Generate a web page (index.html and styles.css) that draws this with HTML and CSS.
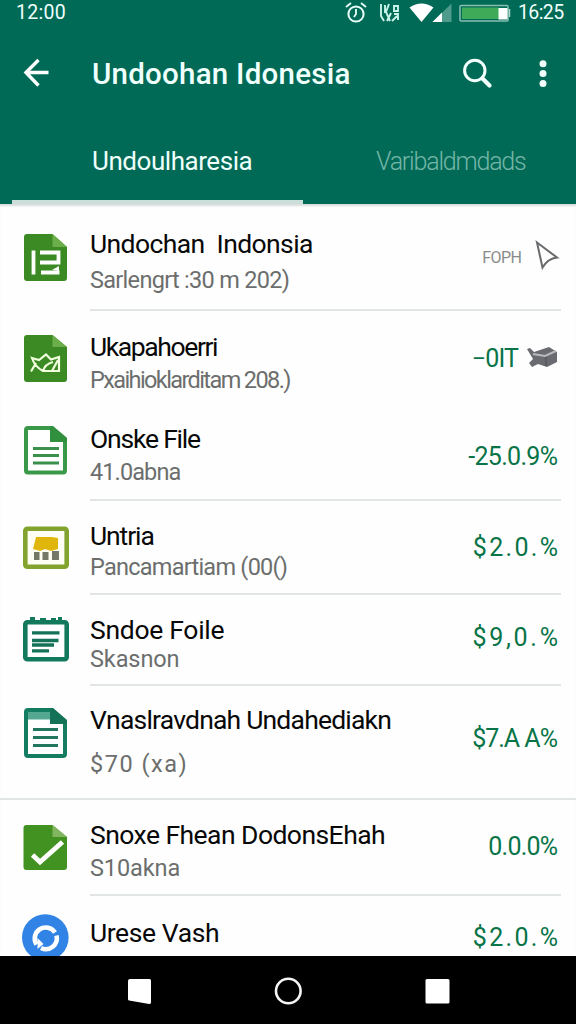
FILE: index.html
```html
<!DOCTYPE html>
<html lang="id">
<head>
<meta charset="utf-8">
<title>Undoohan Idonesia</title>
<link rel="stylesheet" href="styles.css">
</head>
<body>
<div class="screen">
  <header class="header">
    <div class="status">
      <span class="clock">12:00</span>
      <svg class="status-icons" width="170" height="26" viewBox="342 0 170 26">
        <g fill="none" stroke="#eafffa" stroke-width="2"><circle cx="356" cy="14" r="7.6"/><path d="M356 9v5l-2 3M346 7l5-4M361 3l5 4" stroke-width="1.8"/></g>
        <path d="M381 4v12l3 5M385 5v8M389 4l-3 8 4 9M391 13l-4 8M394 6h4v5h-4zM394 14h4v6M392 21l5-5" fill="none" stroke="#c9f3e9" stroke-width="1.9"/>
        <path d="M409.500 7.500Q421.500-.500 433.500 7.500L421.500 22Z" fill="#fff"/>
        <path d="M432.500 22L451.500 3.500V22Z" fill="#4e9a8b"/><path d="M432.500 22L442 12.500V22Z" fill="#fff"/>
        <rect x="460" y="5.500" width="48" height="15.500" rx="1" fill="none" stroke="#85bfb0" stroke-width="1.500"/>
        <rect x="462" y="7.500" width="37" height="11.500" fill="#3fab59"/><rect x="498.500" y="8" width="9" height="11.500" fill="#fff"/><path d="M509.500 9v8" stroke="#a8d5ca" stroke-width="1.500"/>
      </svg>
      <span class="clock clock-end">16:25</span>
    </div>
    <div class="toolbar">
      <svg class="back" width="28" height="32" viewBox="22 57 28 32"><path d="M48.500 72.500H26M38.500 60L26 72.500L38.500 85.500" fill="none" stroke="#fff" stroke-width="3.400"/></svg>
      <h1 class="heading">Undoohan Idonesia</h1>
      <svg class="search" width="34" height="34" viewBox="460 56 34 34" fill="none" stroke="#f2fffc"><circle cx="474.800" cy="70.500" r="10.200" stroke-width="3"/><path d="M482.500 78.500L489.500 85.500" stroke-width="4.200" stroke-linecap="round"/></svg>
      <svg class="more" width="10" height="34" viewBox="538 56 10 34" fill="#f2fffc"><circle cx="543" cy="63.800" r="3.500"/><circle cx="543" cy="73.500" r="3.500"/><circle cx="543" cy="83.500" r="3.500"/></svg>
    </div>
    <nav class="tabs">
      <span class="tab tab-active"><span class="tab-main">Undoulharesia</span></span>
      <span class="tab"><span class="tab-other">Varibaldmdads</span></span>
    </nav>
  </header>

  <main class="list">
    <article class="row r1">
      <svg class="icon" width="48" height="52" viewBox="22 232 48 52"><path d="M27 234H52.500L67 247V278a3 3 0 0 1-3 3H27a3 3 0 0 1-3-3V237a3 3 0 0 1 3-3Z" fill="#3b8a24"/><path d="M52.500 234L67 247H52.500Z" fill="#6cae49"/><path d="M33.500 250.500V274.500M40 252.500H58.500V262.500H40M41 272.500H59.500" fill="none" stroke="#fff" stroke-width="3.800"/><path d="M52 270l7-4v5z" fill="#fff"/></svg>
      <div class="text"><h2 class="title">Undochan &nbsp;Indonsia</h2><p class="sub">Sarlengrt :30 m 202)</p></div>
      <div class="value tiny"><span>FOPH</span><svg width="26" height="32" viewBox="534 239 26 32"><path d="M537 242.500L557 257.500Q548 258.500 542.500 267.500Z" fill="#fff" stroke="#686a6c" stroke-width="2"/></svg></div>
    </article>
    <article class="row r2">
      <svg class="icon" width="48" height="52" viewBox="22 333 48 52"><path d="M27 335H52.500L67 347V379a3 3 0 0 1-3 3H27a3 3 0 0 1-3-3V338a3 3 0 0 1 3-3Z" fill="#3b8a24"/><path d="M52.500 335L67 347H52.500Z" fill="#6cae49"/><path d="M32 358L39 360L46 354.500L51 359.500L59 357V371H43Q35 367 32 358ZM31 371.500L36 363M43 371Q45 364 53 362M52 371L58 360" fill="none" stroke="#f1ffdd" stroke-width="2.200"/></svg>
      <div class="text"><h2 class="title">Ukapahoerri</h2><p class="sub">Pxaihioklarditam 208.)</p></div>
      <div class="value"><span>−0IT</span><svg width="34" height="24" viewBox="526 344 34 24"><path d="M527 349L530 348L534 352L549 347L557 352V362L547 367L538 364L532 367L529 363L533 359Z" fill="#696b70"/><path d="M533 354L545 356L556 351" fill="none" stroke="#b8babd" stroke-width="2"/><path d="M546 357V366" stroke="#4d4f54" stroke-width="1"/></svg></div>
    </article>
    <article class="row r3">
      <svg class="icon" width="48" height="52" viewBox="22 425 48 52"><path d="M28 428H51.500L65 439V470.500a2 2 0 0 1-2 2H28a2 2 0 0 1-2-2V430a2 2 0 0 1 2-2Z" fill="#fff" stroke="#3a9948" stroke-width="4"/><path d="M50 426H53L67 438V442H50Z" fill="#31903d"/><path d="M33 448.500H59M33 455.500H59M33 463H59" stroke="#3b914c" stroke-width="2.800"/></svg>
      <div class="text"><h2 class="title">Onske File</h2><p class="sub">41.0abna</p></div>
      <div class="value"><span>-25.0.9%</span></div>
    </article>
    <article class="row r4">
      <svg class="icon" width="48" height="46" viewBox="22 525 48 46"><rect x="25.300" y="528.800" width="41.400" height="38" rx="2" fill="#fffef5" stroke="#82a32e" stroke-width="4.600"/><path d="M36 537L52 537L58 538V549L51 551L45 549L40 551L33 549Z" fill="#e0b60d"/><path d="M34 552H39.500V560H34ZM42.500 552H48.500V560H42.500ZM52 551H59V560H52Z" fill="#747867"/></svg>
      <div class="text"><h2 class="title">Untria</h2><p class="sub">Pancamartiam (00()</p></div>
      <div class="value"><span>$2.0.%</span></div>
    </article>
    <article class="row r5">
      <svg class="icon" width="48" height="48" viewBox="22 615 48 48"><rect x="25.300" y="622.300" width="41.400" height="37" rx="2" fill="#fff" stroke="#13795c" stroke-width="4.600"/><path d="M30 617H35V621H40V618H46V621H51V618H56V621H58V617H62V623H30Z" fill="#13795c"/><path d="M32 632.800H59.500M32 640.500H58.500M32 645H54M32 650.800H49" stroke="#137258" stroke-width="3.300"/></svg>
      <div class="text"><h2 class="title">Sndoe Foile</h2><p class="sub">Skasnon</p></div>
      <div class="value"><span>$9,0.%</span></div>
    </article>
    <article class="row r6">
      <svg class="icon" width="48" height="52" viewBox="22 707 48 52"><path d="M28 710H52L65 722V754a2 2 0 0 1-2 2H28a2 2 0 0 1-2-2V712a2 2 0 0 1 2-2Z" fill="#fff" stroke="#147d61" stroke-width="4"/><path d="M28 712H51V719.500H28Z" fill="#54a891"/><path d="M50 708H53L67 720V724H50Z" fill="#147357"/><path d="M33 729.500H58M33 737.500H58M33 745.500H58" stroke="#22755e" stroke-width="2.800"/></svg>
      <div class="text"><h2 class="title">Vnaslravdnah Undahediakn</h2><p class="sub">$70 (xa)</p></div>
      <div class="value"><span>$7.A A%</span></div>
    </article>
    <article class="row r7">
      <svg class="icon" width="48" height="50" viewBox="22 823 48 50"><path d="M26.500 825H52.500L67 837V867a3 3 0 0 1-3 3H26.500a3 3 0 0 1-3-3V828a3 3 0 0 1 3-3Z" fill="#419221"/><path d="M52.500 825L67 837H52.500Z" fill="#82b55f"/><path d="M32.500 855L40 862L62.500 842" fill="none" stroke="#fff" stroke-width="4.800"/></svg>
      <div class="text"><h2 class="title">Snoxe Fhean DodonsEhah</h2><p class="sub">S10akna</p></div>
      <div class="value"><span>0.0.0%</span></div>
    </article>
    <article class="row r8">
      <svg class="icon" width="48" height="48" viewBox="22 913 48 48"><circle cx="45.300" cy="937.500" r="23.300" fill="#3183e6"/><path d="M36.500 944.500A11 11 0 0 1 55 932.500M56.500 935.500A11 11 0 0 1 41 948" fill="none" stroke="#fff" stroke-width="4.600"/><path d="M37.500 938V949L43.500 944Z" fill="#fff"/></svg>
      <div class="text"><h2 class="title">Urese Vash</h2></div>
      <div class="value"><span>$2.0.%</span></div>
    </article>
  </main>

  <footer class="navbar">
    <svg width="26" height="28" viewBox="127 977 26 28"><path d="M130 979H149.500a1.500 1.500 0 0 1 1.500 1.500V1002.500a1.500 1.500 0 0 1-1.800 1.400L129 1000.500a1.500 1.500 0 0 1-1-1.500V981a2 2 0 0 1 2-2Z" fill="#fff"/></svg>
    <svg width="30" height="30" viewBox="273 976 30 30"><circle cx="288.300" cy="991" r="12.300" fill="none" stroke="#f5f5f5" stroke-width="2.600"/></svg>
    <svg width="26" height="28" viewBox="425 977 26 28"><rect x="425.500" y="979" width="24" height="24.500" rx="1.500" fill="#fff"/></svg>
  </footer>
</div>
</body>
</html>
```
FILE: styles.css
```css
* { box-sizing: border-box; }
body { margin: 0; font-family: Roboto, "Noto Sans", sans-serif; }
h1, h2, p { margin: 0; font-weight: 400; white-space: nowrap; }
svg { display: block; flex: none; }

.screen { width: 576px; height: 1024px; display: flex; flex-direction: column; overflow: hidden; background: #fdfefd; }

.header { height: 204px; flex: none; background: #006a56; color: #effffb; display: flex; flex-direction: column; }
.status { height: 26px; display: flex; padding-left: 16px; }
.clock { width: 326px; font-size: 19.5px; line-height: 26px; letter-spacing: 0.3px; }
.clock-end { width: 58px; padding-left: 6px; letter-spacing: -0.6px; }
.toolbar { height: 94px; display: flex; align-items: flex-start; padding: 30px 0 0 22px; }
.back { margin-top: 1px; }
.heading { width: 368px; margin: 0 0 0 42px; font-size: 29.5px; line-height: 36px; font-weight: 500; letter-spacing: 0.25px; }
.more { margin-left: 44px; }
.tabs { height: 84px; display: flex; padding-left: 12px; }
.tab { height: 84px; padding: 24px 0 0 80px; font-size: 26px; line-height: 34px; white-space: nowrap; }
.tab-active { width: 291px; border-bottom: 4px solid #cbded9; }
.tab-main { letter-spacing: -0.45px; }
.tab-other { color: #74b5a6; font-size: 25px; font-weight: 300; letter-spacing: -1.2px; }
.tab + .tab { padding-left: 73px; }

.list { flex: 1; min-height: 0; overflow: hidden; box-shadow: inset 0 3px 2px -1px #d9dedc; }
.row { display: flex; height: var(--h); padding-left: 22px; }
.icon { margin-top: var(--icon); }
.text { flex: 1; margin-left: 20px; padding-top: var(--title); border-bottom: 2px solid #e2e5e5; }
.value { width: 150px; margin-right: 15px; padding: var(--value) 3px 0 0; display: flex; justify-content: flex-end; white-space: nowrap; font-size: 25px; line-height: 30px; color: #087448; border-bottom: 2px solid #e2e5e5; }
.value span { letter-spacing: var(--vs); margin-right: calc(-1 * var(--vs)); }
.title { width: 0; font-size: 26.5px; line-height: 30px; color: #080808; letter-spacing: var(--ts); }
.sub { width: 0; margin-top: var(--gap); font-size: 23.5px; line-height: 28px; color: #6c6e6e; letter-spacing: var(--ss); }

.r1 { --h: 107px; --icon: 28px; --title: 25px; --gap: 7px; --value: 37px; --ts: -0.6px; --ss: -0.7px; --vs: -0.5px; }
.r2 { --h: 96px; --icon: 22px; --title: 21px; --gap: 4px; --value: 33px; --ts: -1.4px; --ss: -1.6px; --vs: -0.8px; }
.r3 { --h: 94px; --icon: 18px; --title: 17px; --gap: 4px; --value: 35px; --ts: -1.2px; --ss: -0.9px; --vs: -0.7px; }
.r4 { --h: 94px; --icon: 24px; --title: 20px; --gap: 2px; --value: 32px; --ts: -1.1px; --ss: -0.75px; --vs: 2.3px; }
.r5 { --h: 91px; --icon: 20px; --title: 20px; --gap: 0px; --value: 28px; --ts: -0.3px; --ss: -0.1px; --vs: 2.7px; }
.r6 { --h: 114px; --icon: 21px; --title: 19px; --gap: 15px; --value: 38px; --ts: -0.8px; --ss: 1.5px; --vs: -1px; }
.r7 { --h: 96px; --icon: 23px; --title: 20px; --gap: 4px; --value: 32px; --ts: -0.55px; --ss: -0.1px; --vs: -0.8px; }
.r8 { --h: 60px; --icon: 17px; --title: 22px; --value: 27px; --ts: -0.4px; --vs: 2.3px; }

.r2 .text, .r2 .value, .r6 .text, .r6 .value, .r8 .text, .r8 .value { border-bottom: 0; }
.r6 { border-bottom: 2px solid #e2e5e5; }

.tiny { padding-top: 35px; font-size: 16px; line-height: 38px; color: #898b8b; }
.tiny svg { margin-left: 12px; margin-right: -2px; }
.r2 .value svg { margin: 0 -2px 0 7px; }

.navbar { height: 68px; flex: none; background: #000; display: flex; padding: 21px 0 0 127px; }
.navbar svg:nth-child(2) { margin: -1px 122px 0 120px; }
```
